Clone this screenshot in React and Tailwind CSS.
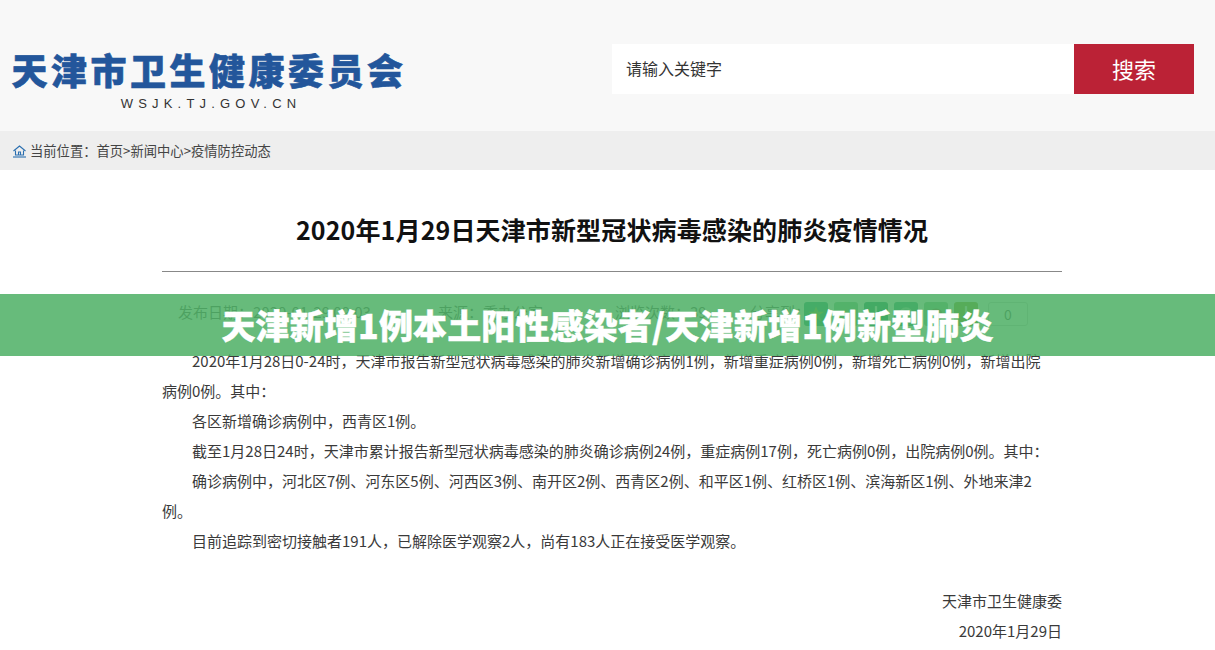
import React from "react";

const cjk = "font-['Noto_Sans_CJK_SC','Liberation_Sans',sans-serif]";

function Paragraph({ children }) {
    return <p className="indent-[30px] pr-[12px]">{children}</p>;
}

function ShareIcon({ color, children }) {
    return (
        <div className={`w-6 h-6 rounded-[3px] flex items-center justify-center ${color}`}>
            <svg width="18" height="18" viewBox="0 0 16 16">{children}</svg>
        </div>
    );
}

function App() {
    return (
        <div className={`relative h-[650px] overflow-hidden bg-white ${cjk}`}>
            {/* Header */}
            <div className="h-[131px] bg-[#f8f8f8] flex items-start justify-between pl-3 pr-[21px]">
                <div className="w-[392px] pt-[44px] flex flex-col items-center">
                    <div className="pl-[2px] text-[36px] leading-[50px] font-black text-[#23569b] tracking-[3.5px] whitespace-nowrap [-webkit-text-stroke:0.6px_#23569b]">天津市卫生健康委员会</div>
                    <div className="pl-[6px] mt-[2px] font-['Liberation_Sans',sans-serif] text-[13px] leading-4 tracking-[5.2px] text-[#333]">WSJK.TJ.GOV.CN</div>
                </div>
                <div className="flex mt-11">
                    <div className="w-[462px] h-[50px] bg-white flex items-center pl-[14px] pb-[2px] text-[16px] text-[#333]">请输入关键字</div>
                    <div className="w-[120px] h-[50px] bg-[#bb2236] flex items-center justify-center pb-[2px] text-[22px] text-white">搜索</div>
                </div>
            </div>

            {/* Breadcrumb */}
            <div className="h-[39px] bg-[#eeeeee] flex items-center pl-3 text-[13.3px] text-[#444]">
                <svg width="15" height="14" viewBox="0 0 15 14" fill="none" stroke="#2a6fb0" strokeWidth="1.1" className="mr-[3px]">
                    <path d="M1.5 7 7.5 2l6 5" />
                    <path d="M3.5 6.5V11h8V6.5" />
                    <path d="M6.5 11V8h2v3" />
                    <path d="M1 13h13" />
                </svg>
                <span>当前位置：首页&gt;新闻中心&gt;疫情防控动态</span>
            </div>

            {/* Article */}
            <div className="w-[900px] ml-[162px]">
                <h1 className="h-[102px] border-b border-[#888] pt-[41px] text-center text-[25px] leading-9 font-bold tracking-[0.14px] text-[#111]">
                    2020年1月29日天津市新型冠状病毒感染的肺炎疫情情况
                </h1>
                <div className="h-[74px] pl-4 pt-[28px] flex items-start text-[15px] leading-6 text-[#555] whitespace-nowrap">
                    <span className="w-[260px]">发布日期：2020-01-29 09:03</span>
                    <span className="w-[177px]">来源：委办公室</span>
                    <span className="w-[135px]">浏览次数：39</span>
                    <span className="w-[54px]">分享到：</span>
                    <div className="flex gap-[6px] mt-[2px]">
                        <ShareIcon color="bg-[#1c9a7c]"><path d="m8 1 2 5h5l-4 3 2 6-5-4-5 4 2-6-4-3h5z" fill="#8fae35" /></ShareIcon>
                        <ShareIcon color="bg-[#7cc28e]"><path d="m8 3 2 4h4l-3 3 1 4-4-2-4 2 1-4-3-3h4z" fill="#a8b850" /></ShareIcon>
                        <ShareIcon color="bg-[#0f8a63]"><path d="M7 1h2v14H7z" fill="#dff1e6" /></ShareIcon>
                        <ShareIcon color="bg-[#2da27a]"><circle cx="8" cy="8" r="5" fill="none" stroke="#8fd0b0" strokeWidth="2" /></ShareIcon>
                        <ShareIcon color="bg-[#7fbf8f]"><circle cx="8" cy="9" r="5" fill="none" stroke="#8a6a45" strokeWidth="2" /></ShareIcon>
                        <ShareIcon color="bg-[#8a9a1f]"><path d="M7 1h2v9H7z" fill="#f0ead0" /></ShareIcon>
                    </div>
                    <div className="ml-[10px] mt-[2px] w-10 h-6 rounded-[3px] border border-[#ccc] text-sm leading-[22px] text-center text-[#555]">0</div>
                </div>

                <div className="text-[15px] leading-[30px] text-[#3a3a3a]">
                    <Paragraph>2020年1月28日0-24时，天津市报告新型冠状病毒感染的肺炎新增确诊病例1例，新增重症病例0例，新增死亡病例0例，新增出院病例0例。其中：</Paragraph>
                    <Paragraph>各区新增确诊病例中，西青区1例。</Paragraph>
                    <Paragraph>截至1月28日24时，天津市累计报告新型冠状病毒感染的肺炎确诊病例24例，重症病例17例，死亡病例0例，出院病例0例。其中：</Paragraph>
                    <Paragraph>确诊病例中，河北区7例、河东区5例、河西区3例、南开区2例、西青区2例、和平区1例、红桥区1例、滨海新区1例、外地来津2例。</Paragraph>
                    <Paragraph>目前追踪到密切接触者191人，已解除医学观察2人，尚有183人正在接受医学观察。</Paragraph>
                    <div className="text-right mt-[30px]">天津市卫生健康委</div>
                    <div className="text-right">2020年1月29日</div>
                </div>
            </div>

            {/* Green title banner lying over the article */}
            <div className="absolute left-0 right-0 top-[294px] h-[62px] bg-[#4caf64]/85 flex items-center justify-center pb-[2px] text-[34px] font-black tracking-[0.15px] text-white whitespace-nowrap [-webkit-text-stroke:0.4px_white]">
                天津新增1例本土阳性感染者/天津新增1例新型肺炎
            </div>
        </div>
    );
}

export default App;
